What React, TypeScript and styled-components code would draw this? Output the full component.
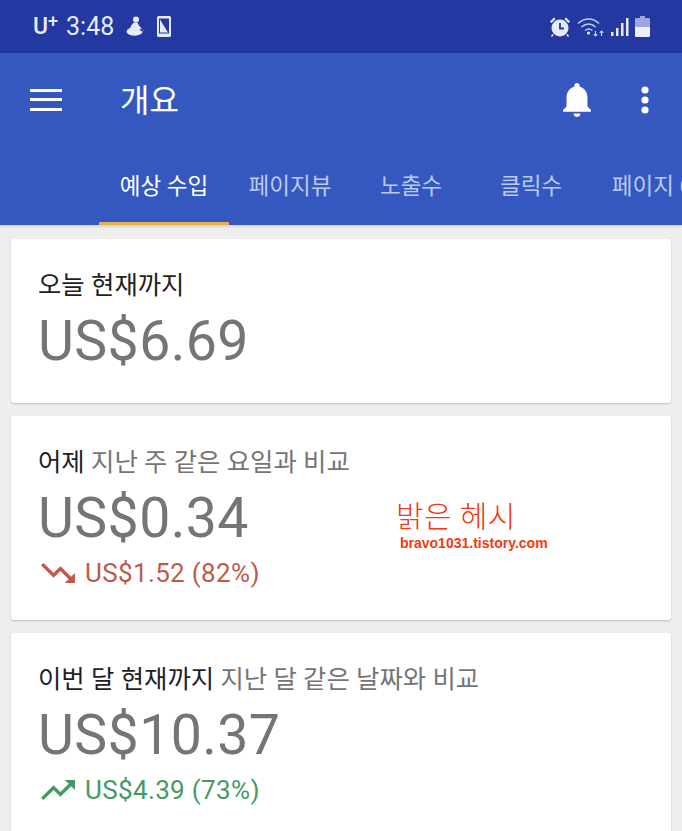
import styled, { createGlobalStyle } from "styled-components";

const GlobalStyle = createGlobalStyle`
  html, body {
    margin: 0;
    padding: 0;
    background: #eeeeee;
  }
  * {
    box-sizing: border-box;
  }
  body {
    font-family: Roboto, "Noto Sans CJK KR", sans-serif;
  }
`;

const Root = styled.div`
  position: relative;
  width: 682px;
  height: 831px;
  overflow: hidden;
  background: #eeeeee;
`;

const StatusBar = styled.div`
  height: 53px;
  background: #2338a0;
  color: #e6ebfa;
  display: flex;
  align-items: center;
  justify-content: space-between;
  padding: 0 32px 0 33px;
`;

const StatusGroup = styled.div`
  display: flex;
  align-items: center;
  gap: ${(p: { $gap: number }) => p.$gap}px;
`;

const Carrier = styled.span`
  font-size: 23px;
  font-weight: 500;
  line-height: 1;
  margin-right: 1px;

  sup {
    font-size: 18px;
    line-height: 0;
    vertical-align: 7px;
  }
`;

const Clock = styled.span`
  font-size: 25px;
  line-height: 1;
  margin-right: 5px;
`;

const PhoneSlot = styled.span`
  display: flex;
  margin-left: 6px;
`;

const AppBar = styled.header`
  height: 172px;
  background: #3558c0;
  box-shadow: 0 1px 3px rgba(0, 0, 0, 0.18);
  display: flex;
  flex-direction: column;
`;

const TopRow = styled.div`
  height: 94px;
  display: flex;
  align-items: center;
  padding: 0 33px 0 30px;
  color: #fff;
`;

const Title = styled.h1`
  flex: 1;
  margin: 2px 0 0 58px;
  font-size: 32px;
  font-weight: 400;
  color: #fff;
  line-height: 1;
`;

const Actions = styled.div`
  display: flex;
  align-items: center;
  gap: 50px;
`;

const Tabs = styled.nav`
  flex: 1;
  display: flex;
  padding-left: 99px;
  overflow: hidden;
`;

const Tab = styled.div<{ $active?: boolean; $width: number }>`
  flex: 0 0 ${(p) => p.$width}px;
  height: 78px;
  padding-top: 24px;
  text-align: center;
  white-space: nowrap;
  font-size: 22.5px;
  line-height: 30px;
  color: ${(p) => (p.$active ? "#ffffff" : "#bcc9ee")};
  border-bottom: 3px solid ${(p) => (p.$active ? "#e8b04a" : "transparent")};
`;

const Cards = styled.main`
  display: flex;
  flex-direction: column;
  gap: 13px;
  padding: 14px 11px 0;
`;

const Card = styled.section<{ $height: number }>`
  height: ${(p) => p.$height}px;
  flex: none;
  background: #fff;
  border-radius: 3px;
  box-shadow: 0 1px 2px rgba(0, 0, 0, 0.2);
  padding: 29px 27px 0;
`;

const CardTitle = styled.div`
  font-size: 25.4px;
  line-height: 34px;
  color: #1f1f1f;
  white-space: nowrap;
`;

const CardHint = styled.span`
  color: #757575;
`;

const Amount = styled.div`
  font-size: 55.4px;
  line-height: 62px;
  margin-top: 9px;
  color: #757575;
  letter-spacing: 0.4px;
`;

const Delta = styled.div<{ $color: string }>`
  display: flex;
  align-items: center;
  gap: 10px;
  margin-top: 7px;
  font-size: 26px;
  line-height: 32px;
  letter-spacing: 0.35px;
  color: ${(p) => p.$color};
`;

const TrendIcon = styled.svg`
  width: 34px;
  height: 20px;
  margin-left: 3px;
  fill: currentColor;
`;

const Watermark = styled.div`
  position: absolute;
  left: 396px;
  top: 499px;
  color: #f23a12;
  text-align: left;
`;

const WatermarkTitle = styled.div`
  font-size: 30px;
  line-height: 36px;
  font-weight: 300;
  letter-spacing: 0.4px;
`;

const WatermarkUrl = styled.div`
  font-family: "Liberation Sans", sans-serif;
  font-size: 14px;
  font-weight: 700;
  line-height: 17px;
  margin: 0 0 0 4px;
`;

const Menu = () => (
  <svg width="32" height="24" viewBox="0 0 32 24" fill="#fff">
    <rect x="0" y="1" width="32" height="3" />
    <rect x="0" y="10" width="32" height="3" />
    <rect x="0" y="20" width="32" height="3" />
  </svg>
);

const Bell = () => (
  <svg width="28" height="34" viewBox="4 2.500 16 19.500" fill="#fff">
    <path d="M12 22c1.100 0 2-.9 2-2h-4c0 1.100.89 2 2 2zm6-6v-5c0-3.070-1.640-5.640-4.500-6.320V4c0-.83-.67-1.500-1.500-1.500s-1.500.67-1.500 1.500v.68C7.630 5.360 6 7.920 6 11v5l-2 2v1h16v-1l-2-2z" />
  </svg>
);

const Dots = () => (
  <svg width="8" height="28" viewBox="0 0 8 28" fill="#fff">
    <circle cx="4" cy="4" r="3.600" />
    <circle cx="4" cy="14" r="3.600" />
    <circle cx="4" cy="24" r="3.600" />
  </svg>
);

const Alarm = () => (
  <svg width="22" height="22" viewBox="0 0 22 22" fill="#e6ebfa">
    <circle cx="11" cy="12" r="8.500" />
    <path d="M11 7v5.500h4" fill="none" stroke="#2338a0" strokeWidth="1.800" />
    <path d="M1 5.500 5 1.500l1.500 1.500-4 4zM21 5.500l-4-4-1.500 1.500 4 4z" />
    <path d="M4 18.500 2.500 20.500M18 18.500l1.500 2" stroke="#e6ebfa" strokeWidth="1.600" />
  </svg>
);

const Wifi = () => (
  <svg width="28" height="22" viewBox="0 0 28 22" fill="none" stroke="#c4cdee">
    <path d="M1 7.500c6.500-6 15-6 21 0" strokeWidth="1.500" />
    <path d="M4.500 11c4.500-4 10-4 14 0" strokeWidth="1.500" />
    <path d="M8 14.500c2.500-2 5-2 7.500 0" strokeWidth="1.500" />
    <circle cx="11.500" cy="17" r="1.600" fill="#e6ebfa" stroke="none" />
    <path d="M18.500 15v5m-1.800-1.800 1.800 1.800 1.800-1.800M24.500 20v-5m-1.800 1.800 1.800-1.800 1.800 1.800" strokeWidth="1.200" />
  </svg>
);

const Signal = () => (
  <svg width="18" height="20" viewBox="0 0 18 20" fill="#e6ebfa">
    <rect x="0" y="15" width="2.500" height="4" />
    <rect x="5" y="11" width="2.500" height="8" />
    <rect x="10" y="6" width="2.500" height="13" />
    <rect x="15" y="1" width="2.500" height="18" />
  </svg>
);

const Battery = () => (
  <svg width="15" height="21" viewBox="0 0 15 21">
    <path d="M5 0h5v2h4a1 1 0 0 1 1 1v8H0V3a1 1 0 0 1 1-1h4z" fill="#9aa8dd" />
    <path d="M0 11h15v9a1 1 0 0 1-1 1H1a1 1 0 0 1-1-1z" fill="#eef1fb" />
  </svg>
);

const Figure = () => (
  <svg width="18" height="21" viewBox="0 0 18 21" fill="#e6ebfa">
    <circle cx="10" cy="3.500" r="3" />
    <path d="M8 6.500c-2 1.500-3 3-3.500 5L1 14c-1 2 0 4 3 5 3 1 8 1 11-1 2-1.500 2.500-3.500 1-5l-3-3.500c-.5-1-1-2-1.500-3zM14.500 12.500l3 2-.8 1.500-3-2z" />
  </svg>
);

const PhoneScan = () => (
  <svg width="14" height="21" viewBox="0 0 14 21">
    <rect x="0" y="0" width="14" height="21" rx="1.500" fill="#e6ebfa" />
    <rect x="2" y="2.500" width="10" height="15" fill="#2338a0" />
    <path d="M3 3.500 11 16.500H3z" fill="#e6ebfa" />
  </svg>
);

const TrendDown = () => (
  <TrendIcon viewBox="2 6 20 12" preserveAspectRatio="none">
    <path d="M16 18l2.290-2.290-4.880-4.880-4 4L2 7.410 3.410 6l6 6 4-4 6.300 6.290L22 12v6z" />
  </TrendIcon>
);

const TrendUp = () => (
  <TrendIcon viewBox="2 6 20 12" preserveAspectRatio="none">
    <path d="M16 6l2.290 2.290-4.880 4.880-4-4L2 16.590 3.410 18l6-6 4 4 6.300-6.290L22 12V6z" />
  </TrendIcon>
);

const tabs = [
  { label: "예상 수입", width: 130, active: true },
  { label: "페이지뷰", width: 122 },
  { label: "노출수", width: 120 },
  { label: "클릭수", width: 120 },
  { label: "페이지 CTR", width: 151 },
];

export default function App() {
  return (
    <Root>
      <GlobalStyle />
      <StatusBar>
        <StatusGroup $gap={7}>
          <Carrier>
            U<sup>+</sup>
          </Carrier>
          <Clock>3:48</Clock>
          <Figure />
          <PhoneSlot>
            <PhoneScan />
          </PhoneSlot>
        </StatusGroup>
        <StatusGroup $gap={6}>
          <Alarm />
          <Wifi />
          <Signal />
          <Battery />
        </StatusGroup>
      </StatusBar>

      <AppBar>
        <TopRow>
          <Menu />
          <Title>개요</Title>
          <Actions>
            <Bell />
            <Dots />
          </Actions>
        </TopRow>
        <Tabs>
          {tabs.map((tab) => (
            <Tab key={tab.label} $active={tab.active} $width={tab.width}>
              {tab.label}
            </Tab>
          ))}
        </Tabs>
      </AppBar>

      <Cards>
        <Card $height={164}>
          <CardTitle>오늘 현재까지</CardTitle>
          <Amount>US$6.69</Amount>
        </Card>
        <Card $height={204}>
          <CardTitle>
            어제 <CardHint>지난 주 같은 요일과 비교</CardHint>
          </CardTitle>
          <Amount>US$0.34</Amount>
          <Delta $color="#bf5a4b">
            <TrendDown />
            US$1.52 (82%)
          </Delta>
        </Card>
        <Card $height={204}>
          <CardTitle>
            이번 달 현재까지 <CardHint>지난 달 같은 날짜와 비교</CardHint>
          </CardTitle>
          <Amount>US$10.37</Amount>
          <Delta $color="#459a64">
            <TrendUp />
            US$4.39 (73%)
          </Delta>
        </Card>
      </Cards>

      <Watermark>
        <WatermarkTitle>밝은 헤시</WatermarkTitle>
        <WatermarkUrl>bravo1031.tistory.com</WatermarkUrl>
      </Watermark>
    </Root>
  );
}
